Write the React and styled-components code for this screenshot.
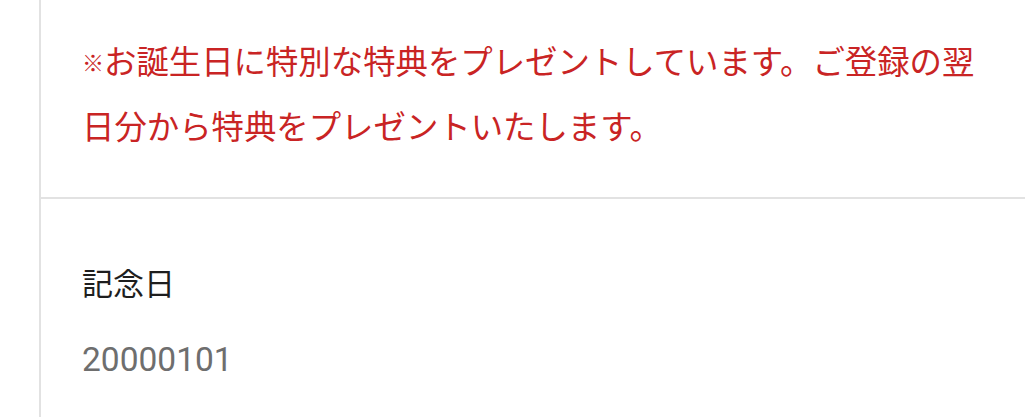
import React from "react";
import styled, { createGlobalStyle } from "styled-components";

const Global = createGlobalStyle`
  html, body { margin: 0; padding: 0; background: #ffffff; }
  body { font-family: "Noto Sans CJK JP", "Noto Sans", sans-serif; }
`;

const Page = styled.div`
  padding-left: 39px;
  width: 1025px;
  height: 417px;
  box-sizing: border-box;
  overflow: hidden;
`;

const Panel = styled.div`
  border-left: 2px solid #e2e2e2;
  height: 100%;
`;

const Section = styled.section`
  padding: ${(p) => p.$pad};
  border-bottom: ${(p) => (p.$divider ? "2px solid #e2e2e2" : "none")};
`;

const Notice = styled.p`
  margin: 0;
  padding-right: 38px;
  color: #c92424;
  font-size: 32.4px;
  line-height: 63px;
  font-family: "Noto Sans CJK JP", sans-serif;
`;

const Mark = styled.span`
  font-size: 22px;
  vertical-align: 3px;
`;

const Label = styled.div`
  color: #1e1e1e;
  font-size: 31px;
  line-height: 40px;
  font-family: "Noto Sans CJK JP", sans-serif;
`;

const Value = styled.div`
  margin-top: 38px;
  color: #6e6e6e;
  font-size: 33.5px;
  line-height: 40px;
  font-family: Roboto, "Noto Sans CJK JP", sans-serif;
`;

export default function App() {
  return (
    <>
      <Global />
      <Page>
        <Panel>
          <Section $pad="28px 0 41px 41px" $divider>
            <Notice>
              <Mark>※</Mark>お誕生日に特別な特典をプレゼントしています。ご登録の翌日分から特典をプレゼントいたします。
            </Notice>
          </Section>
          <Section $pad="63px 0 0 41px">
            <Label>記念日</Label>
            <Value>20000101</Value>
          </Section>
        </Panel>
      </Page>
    </>
  );
}
